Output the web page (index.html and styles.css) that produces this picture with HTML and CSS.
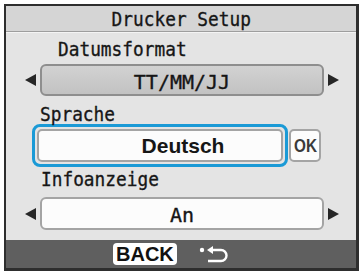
FILE: index.html
```html
<!DOCTYPE html>
<html lang="de">
<head>
<meta charset="utf-8">
<title>Drucker Setup</title>
<link rel="stylesheet" href="styles.css">
</head>
<body>
<div class="screen">
  <div class="title"><span class="mono">Drucker Setup</span></div>
  <div class="content">
    <div class="label label-indent"><span class="mono">Datumsformat</span></div>
    <div class="row row-field1">
      <span class="arrow arrow-left"></span>
      <div class="field field-gray"><span class="value">TT/MM/JJ</span></div>
      <span class="arrow arrow-right"></span>
    </div>
    <div class="label label-2"><span class="mono">Sprache</span></div>
    <div class="row row-focus">
      <div class="focus">
        <div class="field field-white field-lang"><span class="sans-value">Deutsch</span></div>
      </div>
      <div class="ok"><span class="ok-text">OK</span></div>
    </div>
    <div class="label label-3"><span class="mono">Infoanzeige</span></div>
    <div class="row row-field3">
      <span class="arrow arrow-left"></span>
      <div class="field field-white field-info"><span class="value">An</span></div>
      <span class="arrow arrow-right"></span>
    </div>
  </div>
  <div class="footer">
    <span class="back">BACK</span>
    <svg class="return-icon" width="32" height="18" viewBox="0 0 32 18">
      <circle cx="4" cy="5" r="2.2" fill="#fff"/>
      <polygon points="9,5 15,1 15,9" fill="#fff"/>
      <path d="M14 5 H23 A5.5 5.5 0 0 1 23 16 H10" fill="none" stroke="#fff" stroke-width="2.4"/>
    </svg>
  </div>
</div>
</body>
</html>
```
FILE: styles.css
```css
html, body {
  margin: 0;
  padding: 0;
  background: #ffffff;
}
body {
  width: 359px;
  height: 271px;
  overflow: hidden;
}
.screen {
  margin: 4px 0 0 4px;
  width: 355px;
  height: 267px;
  box-sizing: border-box;
  border: 2px solid #2e2e2e;
  border-right-width: 3px;
  border-bottom-width: 3px;
  background: #e4e4e4;
  display: flex;
  flex-direction: column;
  color: #161616;
}
.mono {
  display: inline-block;
  font-family: "DejaVu Sans Mono", monospace;
  font-size: 20px;
  line-height: 20px;
  transform: scaleX(0.89);
  white-space: pre;
  -webkit-text-stroke: 0.35px currentColor;
}
.title {
  height: 26px;
  box-sizing: border-box;
  padding-top: 3px;
  background: #d5d5d5;
  border-bottom: 1px solid #9e9e9e;
  box-shadow: 0 1px 0 #f4f4f4;
  display: flex;
  justify-content: center;
}
.content {
  display: flex;
  flex-direction: column;
}
.label {
  height: 20px;
  display: flex;
}
.label .mono {
  transform-origin: left center;
}
.label-indent {
  margin-top: 7px;
  padding-left: 52px;
}
.label-2 {
  margin-top: 8px;
  padding-left: 34px;
}
.label-3 {
  margin-top: 2px;
  padding-left: 35px;
}
.row {
  display: flex;
  align-items: center;
}
.row-field1 {
  margin-top: 5px;
  padding-left: 19px;
}
.row-field3 {
  margin-top: 8px;
  padding-left: 19px;
}
.arrow {
  width: 0;
  height: 0;
  border-top: 6px solid transparent;
  border-bottom: 6px solid transparent;
}
.arrow-left {
  border-right: 11px solid #262626;
  margin-right: 4px;
}
.arrow-right {
  border-left: 11px solid #262626;
  margin-left: 4px;
}
.field {
  box-sizing: border-box;
  display: flex;
  align-items: center;
  justify-content: center;
  border-radius: 6px;
}
.field-gray {
  width: 284px;
  height: 32px;
  background: linear-gradient(#d2d2d2, #c2c2c2);
  border: 2px solid #8e8e8e;
}
.field-white {
  background: #fcfcfc;
  border: 2px solid #a4a4a4;
}
.field-info {
  width: 284px;
  height: 33px;
}
.value {
  font-family: "DejaVu Sans Mono", monospace;
  font-size: 20px;
  line-height: 20px;
  padding-top: 3px;
  -webkit-text-stroke: 0.35px currentColor;
}
.row-focus {
  margin-left: 26px;
}
.focus {
  width: 256px;
  height: 43px;
  box-sizing: border-box;
  border: 3px solid #1b9ad6;
  border-radius: 8px;
  padding: 2px;
  background: #e4e4e4;
}
.field-lang {
  width: 100%;
  height: 100%;
  padding-left: 46px;
  border-radius: 5px;
}
.sans-value {
  font-family: "Liberation Sans", Arial, sans-serif;
  font-weight: bold;
  font-size: 21px;
  line-height: 21px;
}
.ok {
  margin-left: 1px;
  width: 32px;
  height: 33px;
  box-sizing: border-box;
  background: #fcfcfc;
  border: 2px solid #a4a4a4;
  border-radius: 5px;
  display: flex;
  align-items: center;
  justify-content: center;
}
.ok-text {
  font-family: "Liberation Sans", Arial, sans-serif;
  font-weight: bold;
  font-size: 18px;
  line-height: 18px;
  color: #3a3a3a;
  display: inline-block;
  transform: scaleX(0.85);
}
.footer {
  margin-top: auto;
  height: 28px;
  background: #5f5f5f;
  display: flex;
  align-items: center;
  padding-left: 107px;
  gap: 21px;
}
.back {
  background: #ffffff;
  color: #111111;
  border-radius: 4px;
  font-family: "Liberation Sans", Arial, sans-serif;
  font-weight: bold;
  font-size: 20px;
  line-height: 22px;
  height: 22px;
  padding: 0 3px;
}
.return-icon {
  display: block;
}
```
